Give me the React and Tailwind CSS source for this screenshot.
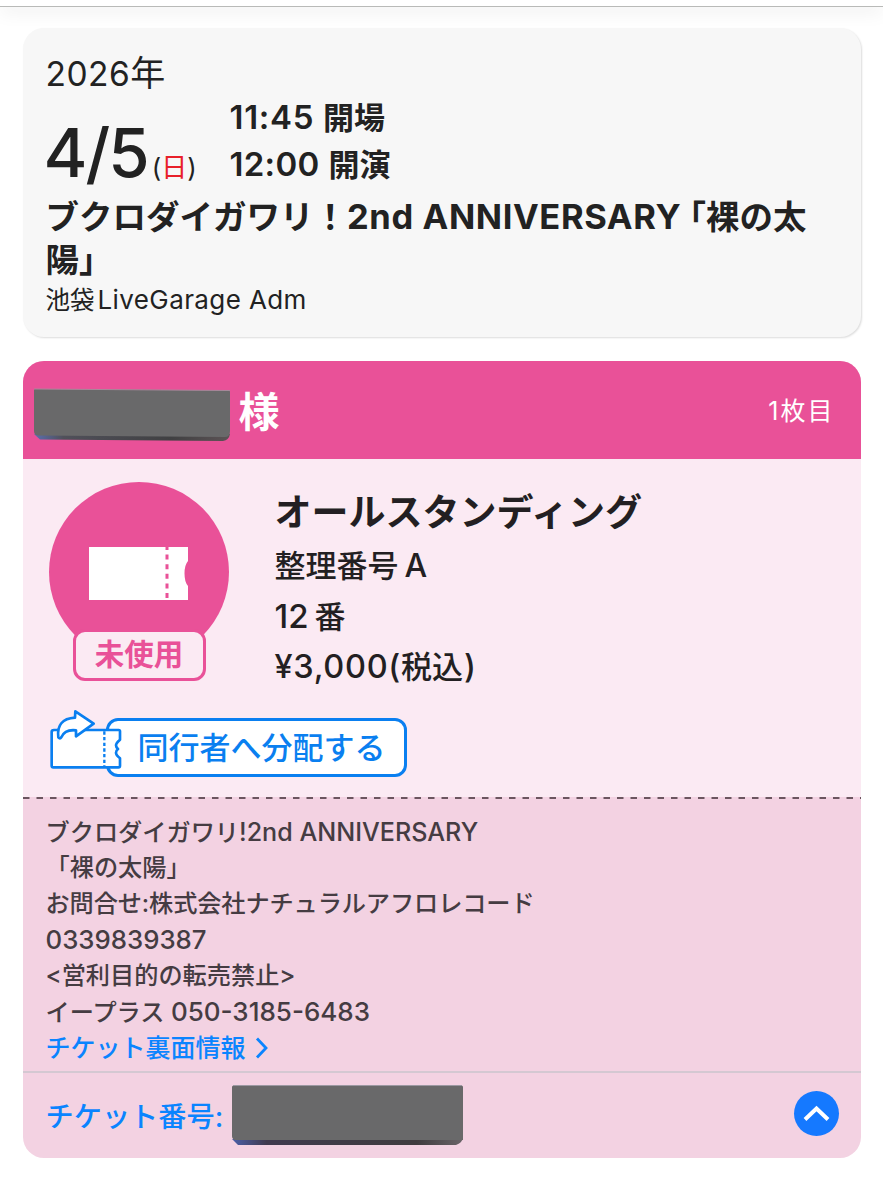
import { useState } from 'react';

const TICKET = {
  date: '4/5',
  day: '日',
  venue: '池袋',
  venueLatin: 'LiveGarage Adm',
  seat: 'オールスタンディング',
};

const ShareTicketIcon = () => (
  <svg className="relative z-10 -mr-[19px] h-[62px] w-[76px] shrink-0" viewBox="87 51 228 186" fill="none">
    <path
      d="M102 117 H296 Q300 117 300 121 V146 Q288 156 288 163 Q288 169 294 174 Q288 179 288 185 Q288 192 300 202 V224 Q300 229 295 229 H100 Q95 229 95 224 V122 Q95 117 102 117 Z"
      fill="#fff"
      stroke="#0a7ff0"
      strokeWidth="8"
      strokeLinejoin="round"
    />
    <path d="M253 121 V228" stroke="#0a7ff0" strokeWidth="7" strokeDasharray="10 7" />
    <path
      d="M166 61 L221 98 L168 136 V118 Q135 114 124 139 Q120 145 115 139 Q108 84 165 80 Z"
      fill="#fff"
      stroke="#0a7ff0"
      strokeWidth="8"
      strokeLinejoin="round"
    />
  </svg>
);

const StatusMark = () => (
  <div className="relative h-[201px] w-[180px] shrink-0">
    <svg className="h-[180px] w-[180px]" viewBox="0 0 180 180">
      <circle cx="90" cy="90" r="90" fill="#e95198" />
      <path d="M40 65 H139 V79 Q135.500 83 135.500 91.500 Q135.500 100 139 104 V118 H40 Z" fill="#fff" />
      <path d="M118 65 V118" stroke="#e95198" strokeWidth="3" strokeDasharray="5 4.600" strokeDashoffset="2" />
    </svg>
    <div className="absolute left-[24px] top-[147px] flex h-[52px] w-[133px] items-center justify-center rounded-[12px] border-[3px] border-[#e95198] bg-[#fbeaf3] text-[29.500px] font-bold leading-none text-[#e95198]">
      未使用
    </div>
  </div>
);

const MaskedName = () => (
  <svg className="mt-[5px] h-[54px] w-[198px] shrink-0" viewBox="0 0 198 54">
    <defs>
      <linearGradient id="name-edge" x1="0" x2="1" y1="0" y2="0">
        <stop offset="0" stopColor="#5b6fb0" />
        <stop offset="0.150" stopColor="#50505a" />
        <stop offset="0.700" stopColor="#404042" />
        <stop offset="1" stopColor="#5c5355" />
      </linearGradient>
    </defs>
    <path d="M0 46 L6 51.500 L189 53 Q195 52 196 46 Z" fill="url(#name-edge)" />
    <path d="M0 2 Q0 1 1 1 L195 2.500 Q196 2.500 196 4 V43 Q196 49 191 49 L4 47.500 Q0 47 0 43 Z" fill="#69696a" />
    <path d="M0 1 L196 2.500" stroke="#a8899b" strokeWidth="1" />
  </svg>
);

const MaskedNumber = () => (
  <svg className="h-[61px] w-[232px] shrink-0" viewBox="0 0 232 61">
    <defs>
      <linearGradient id="number-edge" x1="0" x2="1" y1="0" y2="0">
        <stop offset="0" stopColor="#4b5fa8" />
        <stop offset="0.150" stopColor="#403a4e" />
        <stop offset="0.800" stopColor="#403c3f" />
        <stop offset="1" stopColor="#6a6468" />
      </linearGradient>
    </defs>
    <path d="M0 54 L6 60 H224 Q230 58 231 53 Z" fill="url(#number-edge)" />
    <path d="M0 2 Q0 0.500 1.500 0.500 H229.500 Q231 0.500 231 2 V55 H3 Q0 54 0 51 Z" fill="#69696a" />
    <path d="M1 0.500 H230" stroke="#9c98a2" strokeWidth="1" />
  </svg>
);

const EventCard = () => (
  <section className="h-[309px] rounded-[21px] bg-[#f7f7f7] px-[23px] pt-[23px] text-[#222] shadow-[1px_1px_2px_rgba(0,0,0,0.140)]">
    <p className="h-[43px] text-[35px] leading-[45px]">
      <span className="text-[33.500px] tracking-[0.500px]">2026</span>年
    </p>
    <div className="flex h-[97px]">
      <div className="-ml-[2px] flex w-[186px] items-baseline pt-[26px] leading-[66px]">
        <span className="text-[67px] font-medium tracking-[-2px]">{TICKET.date}</span>
        <span className="ml-[4px] text-[26px]">
          (<span className="text-[#e8202a]">{TICKET.day}</span>)
        </span>
      </div>
      <div className="text-[31px] font-semibold leading-[47px]">
        <p>
          <span className="mr-[1px] text-[33px] tracking-[0.700px]">11:45</span> 開場
        </p>
        <p>
          <span className="mr-[1px] text-[33px] tracking-[0.300px]">12:00</span> 開演
        </p>
      </div>
    </div>
    <h1 className="mt-[4px] whitespace-nowrap text-[33.500px] font-semibold leading-[43px]">
      ブクロダイガワリ！
      <span className="mr-[8px] text-[34.500px] font-bold tracking-[0.600px]">2nd ANNIVERSARY</span>
      <span className="[font-feature-settings:'halt']">「</span>裸の太
      <br />
      陽<span className="[font-feature-settings:'halt']">」</span>
    </h1>
    <p className="text-[24.500px] leading-[36px]">
      {TICKET.venue}
      <span className="ml-[3px] text-[26px] tracking-[0.400px]">{TICKET.venueLatin}</span>
    </p>
  </section>
);

const TicketCard = () => {
  const [open, setOpen] = useState(true);

  return (
    <section className="mt-6 overflow-hidden rounded-[21px] bg-[#f3d2e2]">
      <header className="flex h-[98px] items-center bg-[#e95198] pl-[11px] pr-[26px] pt-1 text-white">
        <MaskedName />
        <span className="ml-[7px] text-[41px] font-bold leading-none">様</span>
        <span className="ml-auto text-[25px] tracking-[2px]">1枚目</span>
      </header>

      <div className="h-[338px] bg-[#fbeaf3] pl-[26px] pt-[23px]">
        <div className="flex">
          <StatusMark />
          <div className="ml-[46px] whitespace-nowrap text-[31px] font-medium leading-[50px] text-[#231f22]">
            <h2 className="h-[59px] text-[37px] font-bold leading-[61px]">{TICKET.seat}</h2>
            <p>
              整理番号<span className="ml-1.5 text-[32px]">A</span>
            </p>
            <p>
              <span className="mr-1.5 text-[33px]">12</span>番
            </p>
            <p>
              <span className="text-[32.500px] tracking-[0.700px]">¥3,000(</span>
              税込<span className="ml-px text-[32.500px]">)</span>
            </p>
          </div>
        </div>
        <button type="button" className="mt-4 flex items-start">
          <ShareTicketIcon />
          <span className="mt-[10px] flex h-[59px] w-[301px] items-center whitespace-nowrap rounded-[12px] border-[3px] border-[#0a7ff0] bg-white pl-[29px] text-[31px] font-medium leading-none text-[#0a7ff0]">
            同行者へ分配する
          </span>
        </button>
      </div>

      <svg className="block h-0.5 w-full" viewBox="0 0 838 2">
        <path d="M0 1 H838" stroke="#6b555f" strokeWidth="2" strokeDasharray="6.500 7" />
      </svg>

      {open && (
        <div className="flex h-[272px] flex-col whitespace-nowrap pl-[23px] pt-[15px] text-[24.200px] font-medium leading-[36px] text-[#453c42]">
          <p className="h-9">
            ブクロダイガワリ<span className="text-[25.100px]">!2nd ANNIVERSARY</span>
          </p>
          <p className="h-9">
            「裸の太陽<span className="[font-feature-settings:'halt']">」</span>
          </p>
          <p className="h-9 tracking-[-0.100px]">お問合せ:株式会社ナチュラルアフロレコード</p>
          <p className="h-9 text-[25.800px]">0339839387</p>
          <p className="h-9">&lt;営利目的の転売禁止&gt;</p>
          <p className="h-9">
            イープラス <span className="text-[26px]">050-3185-6483</span>
          </p>
          <a className="flex h-9 items-center text-[25px] text-[#0a84ff]">
            チケット裏面情報
            <svg className="ml-[9px] h-[22px] w-[13px]" viewBox="0 0 13 22" fill="none">
              <path d="M2 1.500 L11 11 L2 20.500" stroke="#0a84ff" strokeWidth="2.800" />
            </svg>
          </a>
        </div>
      )}

      <footer className="flex h-[87px] items-center border-t-2 border-[#d4c8d2] pl-[23px] pr-[22px]">
        <span className="w-[186px] whitespace-nowrap pt-1 text-[28.200px] font-medium text-[#0a84ff]">チケット番号:</span>
        <MaskedNumber />
        <button
          type="button"
          onClick={() => setOpen((prev) => !prev)}
          className="mb-1 ml-auto flex size-[45px] items-center justify-center rounded-full bg-[#1579ff]"
        >
          <svg className="h-[17px] w-[27px]" viewBox="0 0 27 17" fill="none">
            <path d="M2 14.500 L13.500 3.500 L25 14.500" stroke="#fff" strokeWidth="4" />
          </svg>
        </button>
      </footer>
    </section>
  );
};

const App = () => (
  <div className="min-h-screen bg-white font-[Inter,'Noto_Sans_CJK_JP',sans-serif]" lang="ja">
    <div className="h-[7px] border-b border-[#b9bab8] bg-white shadow-[0_4px_18px_rgba(0,0,0,0.100)]" />
    <main className="px-[22.500px] pt-[21px]">
      <EventCard />
      <TicketCard />
    </main>
  </div>
);

export default App;
